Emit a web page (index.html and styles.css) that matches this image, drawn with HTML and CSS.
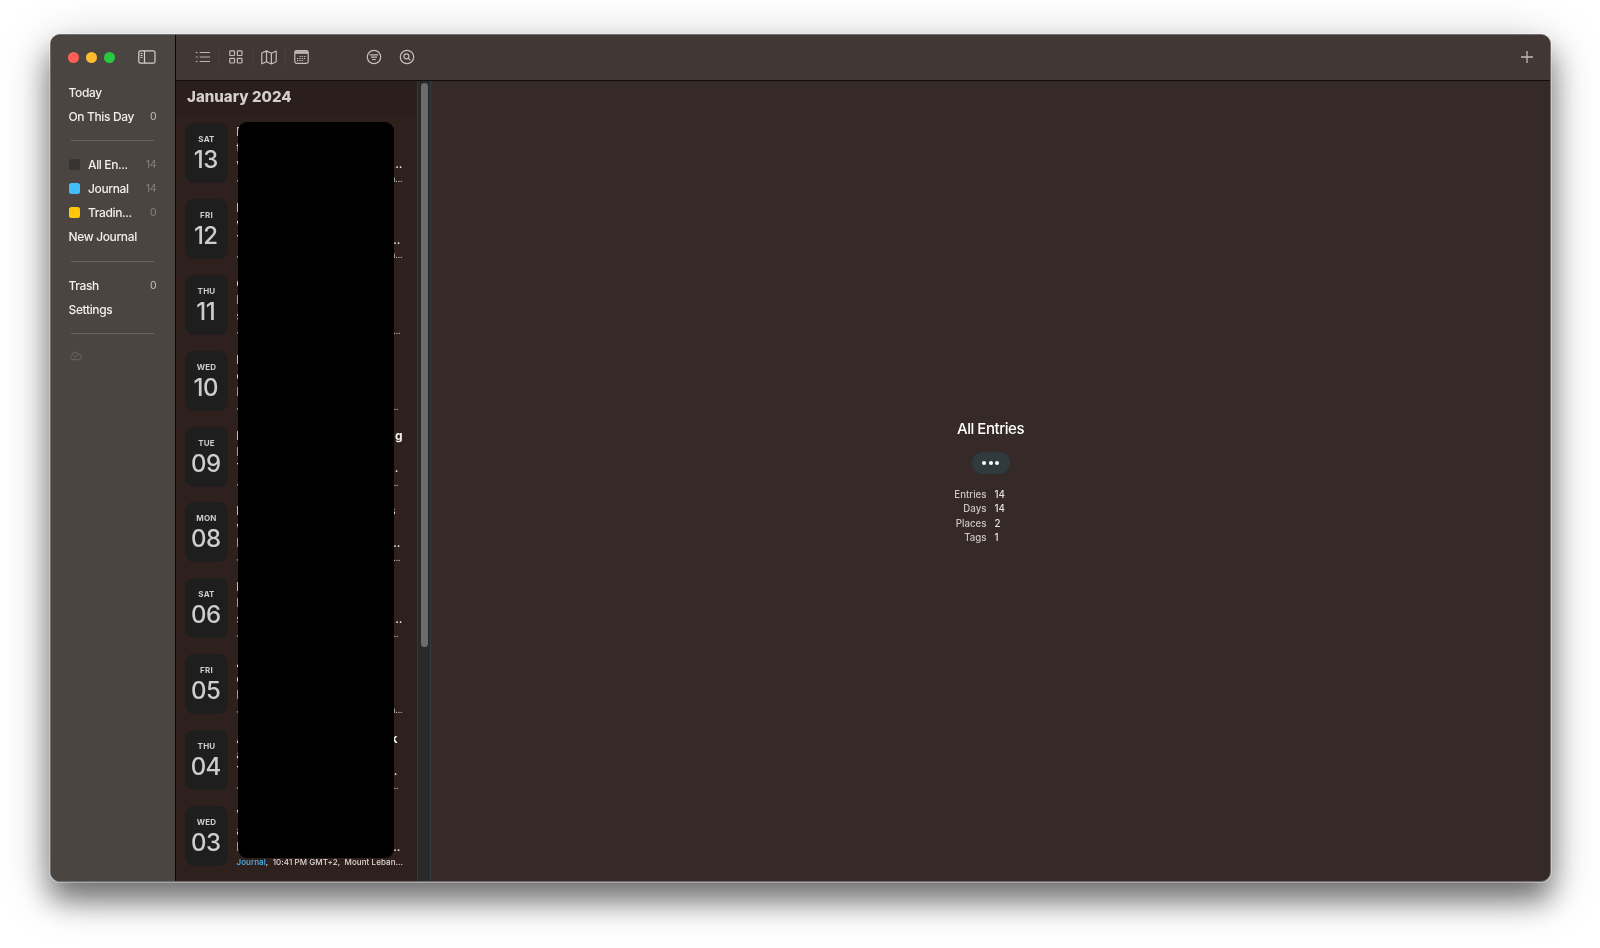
FILE: index.html
```html
<!DOCTYPE html>
<html lang="en">
<head>
<meta charset="utf-8">
<title>All Entries</title>
<link rel="stylesheet" href="styles.css">
</head>
<body>
<div class="window">
  <aside class="sidebar">
    <div class="titlebar">
      <i class="light red"></i><i class="light amber"></i><i class="light green"></i>
      <svg class="panel-icon" width="18" height="14" viewBox="0 0 18 14" fill="none" stroke="#d6d1ce" stroke-width="1.2"><rect x=".8" y=".8" width="16.2" height="12.4" rx="1.8"/><path d="M6.5 1v12M2.5 3.5h2M2.5 5.5h2M2.5 7.5h2"/></svg>
    </div>
    <nav class="nav">
      <div class="item"><span>Today</span></div>
      <div class="item"><span>On This Day</span><b>0</b></div>
      <div class="divider"></div>
      <div class="item dim"><i class="swatch gray"></i><span>All En...</span><b>14</b></div>
      <div class="item dim"><i class="swatch blue"></i><span>Journal</span><b>14</b></div>
      <div class="item dim"><i class="swatch yellow"></i><span>Tradin...</span><b>0</b></div>
      <div class="item"><span>New Journal</span></div>
      <div class="divider"></div>
      <div class="item"><span>Trash</span><b>0</b></div>
      <div class="item"><span>Settings</span></div>
      <div class="divider"></div>
      <div class="item"><svg class="cloud" width="12" height="10" viewBox="0 0 12 10" fill="none" stroke="#6d6764" stroke-width="1"><path d="M3 8.700C1.500 8.700.600 7.800.600 6.500.600 5.400 1.300 4.600 2.100 4.400 2.100 2.300 3.400 1.200 5 1.200c1.400 0 2.400.7 2.900 2 2-.2 3.500 1 3.500 2.800 0 1.600-1.100 2.700-2.700 2.700zM3.700 5l1.300 1.300L7.200 4"/></svg></div>
    </nav>
  </aside>
  <div class="main">
    <header class="toolbar">
      <div class="views">
        <span class="tool"><svg width="16" height="12" viewBox="0 0 16 12" fill="none" stroke="#bbb3b0" stroke-width="1.2"><path d="M4.700 1.500H15M4.700 6H15M4.700 10.500H15M.8 1.500h1.800M.8 6h1.800M.8 10.500h1.800"/></svg></span>
        <span class="tool"><svg width="14" height="14" viewBox="0 0 14 14" fill="none" stroke="#c6bebb" stroke-width="1.200"><rect x=".8" y=".8" width="4.700" height="4.700" rx=".8"/><rect x="8.300" y=".8" width="4.700" height="4.700" rx=".8"/><rect x=".8" y="8.300" width="4.700" height="4.700" rx=".8"/><rect x="8.300" y="8.300" width="4.700" height="4.700" rx=".8"/></svg></span>
        <span class="tool"><svg width="16" height="15" viewBox="0 0 16 15" fill="none" stroke="#c6bebb" stroke-width="1.200" stroke-linejoin="round"><path d="M.8 3 5.500.900 10.400 3.200 15.200 1v10.800l-4.800 2.200-4.900-2.300L.8 13.800zM5.500.900v10.800M10.400 3.200V14"/></svg></span>
        <span class="tool"><svg width="15" height="14" viewBox="0 0 15 14" fill="none" stroke="#c6bebb" stroke-width="1.200"><rect x=".8" y=".7" width="13.400" height="12.600" rx="1.800"/><path d="M1 2.500h13" stroke-width="2.600"/><path d="M5.500 6.500h7M3 8.500h9M3 10.500h7" stroke-dasharray="1.300 1"/></svg></span>
      </div>
      <div class="filters">
        <svg width="16" height="16" viewBox="0 0 16 16" fill="none" stroke="#c6bebb" stroke-width="1.200"><circle cx="8" cy="8" r="6.700"/><path d="M3.800 5.800h8.400M5 8.200h6M6.200 10.500h3.600"/></svg>
        <svg width="16" height="16" viewBox="0 0 16 16" fill="none" stroke="#c6bebb" stroke-width="1.200"><circle cx="8" cy="8" r="6.700"/><circle cx="7.400" cy="7.300" r="2.500"/><path d="m9.200 9.200 2.200 2.200"/></svg>
      </div>
      <svg class="add" width="14" height="14" viewBox="0 0 14 14" stroke="#c4bcb9" stroke-width="1.300"><path d="M7 1v12M1 7h12"/></svg>
    </header>
    <div class="content">
      <section class="list">
        <h2>January 2024</h2>
        <div class="entries">
          <article class="entry"><div class="date"><small>SAT</small><strong>13</strong></div><div class="text"><p class="title"><span>M</span></p><p><span>t</span></p><p><span>w</span><span>...</span></p><p class="meta"><a>J</a><span>n...</span></p></div></article>
          <article class="entry"><div class="date"><small>FRI</small><strong>12</strong></div><div class="text"><p class="title"><span>M</span></p><p><span>w</span></p><p class="in"><span>T</span><span>...</span></p><p class="meta"><a>J</a><span>n...</span></p></div></article>
          <article class="entry"><div class="date"><small>THU</small><strong>11</strong></div><div class="text"><p class="title"><span>C</span></p><p><span>I</span></p><p><span>s</span></p><p class="meta in"><a>J</a><span>...</span></p></div></article>
          <article class="entry"><div class="date"><small>WED</small><strong>10</strong></div><div class="text"><p class="title"><span>I</span></p><p><span>c</span></p><p><span>I</span></p><p class="meta in2"><a>J</a><span>...</span></p></div></article>
          <article class="entry"><div class="date"><small>TUE</small><strong>09</strong></div><div class="text"><p class="title"><span>I</span><span>g</span></p><p><span>I</span></p><p class="in2"><span>T</span><span>...</span></p><p class="meta in2"><a>J</a><span>...</span></p></div></article>
          <article class="entry"><div class="date"><small>MON</small><strong>08</strong></div><div class="text"><p class="title in3"><span>I</span><span>s</span></p><p><span>w</span></p><p class="in"><span>I</span><span>...</span></p><p class="meta in"><a>J</a><span>...</span></p></div></article>
          <article class="entry"><div class="date"><small>SAT</small><strong>06</strong></div><div class="text"><p class="title"><span>I</span></p><p><span>I</span></p><p><span>s</span><span>...</span></p><p class="meta in2"><a>J</a><span>...</span></p></div></article>
          <article class="entry"><div class="date"><small>FRI</small><strong>05</strong></div><div class="text"><p class="title"><span>A</span></p><p><span>c</span></p><p><span>I</span></p><p class="meta"><a>J</a><span>n...</span></p></div></article>
          <article class="entry"><div class="date"><small>THU</small><strong>04</strong></div><div class="text"><p class="title in4"><span>A</span><span>k</span></p><p><span>a</span></p><p class="in4"><span>T</span><span>...</span></p><p class="meta in2"><a>J</a><span>...</span></p></div></article>
          <article class="entry"><div class="date"><small>WED</small><strong>03</strong></div><div class="text"><p class="title"><span>V</span></p><p><span>a</span></p><p class="in"><span>I</span><span>...</span></p><p class="meta full"><a>Journal</a><span>,&nbsp; 10:41 PM GMT+2,&nbsp; Mount Leban...</span></p></div></article>
          <div class="cover"></div>
        </div>
      </section>
      <div class="track"><div class="thumb"></div></div>
      <section class="detail">
        <h1>All Entries</h1>
        <button class="more"><i></i><i></i><i></i></button>
        <dl>
          <dt>Entries</dt><dd>14</dd>
          <dt>Days</dt><dd>14</dd>
          <dt>Places</dt><dd>2</dd>
          <dt>Tags</dt><dd>1</dd>
        </dl>
      </section>
    </div>
  </div>
</div>
</body>
</html>
```
FILE: styles.css
```css
* { box-sizing: border-box; }
body {
  margin: 0;
  height: 948px;
  padding: 34px 49px 0 50px;
  overflow: hidden;
  background: #fff;
  font-family: Inter, "Liberation Sans", sans-serif;
  color: #f2efed;
}
h1, h2, p, dl, dd { margin: 0; }
.window {
  display: flex;
  width: 1501px;
  height: 848px;
  border: 1px solid #74706d;
  border-radius: 10px;
  overflow: hidden;
  will-change: transform;
  background: #352a27;
  box-shadow: 0 0 0 1px rgba(255,255,255,.3), 0 18px 28px rgba(0,0,0,.45), 0 12px 50px rgba(0,0,0,.27);
}

/* Sidebar */
.sidebar { width: 125px; flex: none; background: #4b4541; border-right: 1px solid #090605; }
.titlebar { display: flex; align-items: center; height: 45px; padding: 0 0 1px 16.5px; }
.light { width: 11px; height: 11px; border-radius: 50%; margin-right: 7px; }
.red { background: #ff5f57; }
.amber { background: #febc2e; }
.green { background: #28c840; }
.panel-icon { margin-left: 16px; }
.nav { padding: 0 18.5px 0 17.500px; }
.item { display: flex; align-items: center; height: 24.15px; font-size: 12px; font-weight: 500; letter-spacing: -.36px; white-space: nowrap; }
.item b { margin-left: auto; font-size: 10.5px; font-weight: 400; letter-spacing: -.1px; color: #c5c0bd; }
.item.dim b { color: #86807d; }
.swatch { width: 11px; height: 11px; border-radius: 2.5px; margin-right: 8.5px; }
.gray { background: #363534; }
.blue { background: #43bdfc; }
.yellow { background: #ffc60a; }
.cloud { margin: 0 0 3px 1px; }
.divider { height: 24.15px; padding: 12px 2.500px 0; }
.divider::after { content: ""; display: block; height: 1px; background: #68625f; }

/* Toolbar */
.main { flex: 1; display: flex; flex-direction: column; min-width: 0; }
.toolbar { display: flex; align-items: center; height: 46px; flex: none; padding: 0 16px 1px 11px; background: #413735; border-bottom: 1px solid #130d0c; }
.views { display: flex; }
.tool { display: flex; align-items: center; justify-content: center; width: 33px; height: 18px; border-right: 1px solid #4a403e; }
.tool:last-child { width: 31px; border: 0; }
.filters { display: flex; gap: 17px; margin-left: 49px; }
.add { margin-left: auto; }

/* Entry list */
.content { flex: 1; display: flex; min-height: 0; }
.list { width: 241px; flex: none; background: #2d201d; }
.list h2 { height: 34px; padding: 5px 0 0 11px; background: #2a1f1d; border-bottom: 1px solid #291c19; font-size: 15px; line-height: 22px; font-weight: 800; letter-spacing: .03px; color: #d3cfcd; }
.entries { position: relative; padding: 8px 14.500px 0 9px; }
.entry { display: flex; gap: 8.500px; height: 75.9px; }
.date { display: flex; flex-direction: column; align-items: center; width: 43px; height: 60px; padding-top: 11px; border-radius: 9px; background: #1e1e1e; flex: none; color: #cdcdcd; }
.date small { font-size: 8px; line-height: 11px; font-weight: 700; letter-spacing: .2px; }
.date strong { font-size: 24px; line-height: 29px; font-weight: 500; letter-spacing: -.5px; margin-right: 1.500px; }
.text { flex: 1; min-width: 0; }
.text p { display: flex; justify-content: space-between; height: 16px; font-size: 12px; line-height: 17px; font-weight: 500; white-space: nowrap; }
.text .title { font-weight: 700; }
.text .meta { height: 12px; font-size: 8px; line-height: 16px; color: #c9c4c2; }
.text .full { justify-content: flex-start; color: #dedad8; letter-spacing: .07px; }
.meta a { color: #4db8f5; }
.text .in { padding-right: 2px; }
.text .in2 { padding-right: 4px; }
.text .in3 { padding-right: 7px; }
.text .in4 { padding-right: 5px; }
.cover { position: absolute; left: 62px; top: 7px; width: 156px; height: 736px; border-radius: 9px; background: #000; }
.track { width: 14px; flex: none; padding: 2px 3px; background: #292929; border-left: 1px solid #353a3b; border-right: 1px solid #343b40; }
.thumb { width: 7px; height: 564px; border-radius: 4px; background: #6c6c6c; }

/* Detail pane */
.detail { flex: 1; display: flex; flex-direction: column; align-items: center; padding-top: 337px; }
.detail h1 { font-size: 15px; line-height: 22px; font-weight: 500; letter-spacing: -.45px; color: #fff; }
.more { display: flex; align-items: center; justify-content: center; gap: 2.500px; width: 38px; height: 22px; margin: 12px 0 14px; padding: 0; border: 0; border-radius: 11px; background: #30393d; }
.more i { width: 4px; height: 4px; border-radius: 50%; background: #fff; }
.detail dl { display: grid; grid-template-columns: 60px 60px; column-gap: 8px; font-size: 9.700px; line-height: 14.300px; font-weight: 500; }
.detail dt { text-align: right; color: #cbc5c3; }
.detail dd { color: #e7e3e1; }
```
